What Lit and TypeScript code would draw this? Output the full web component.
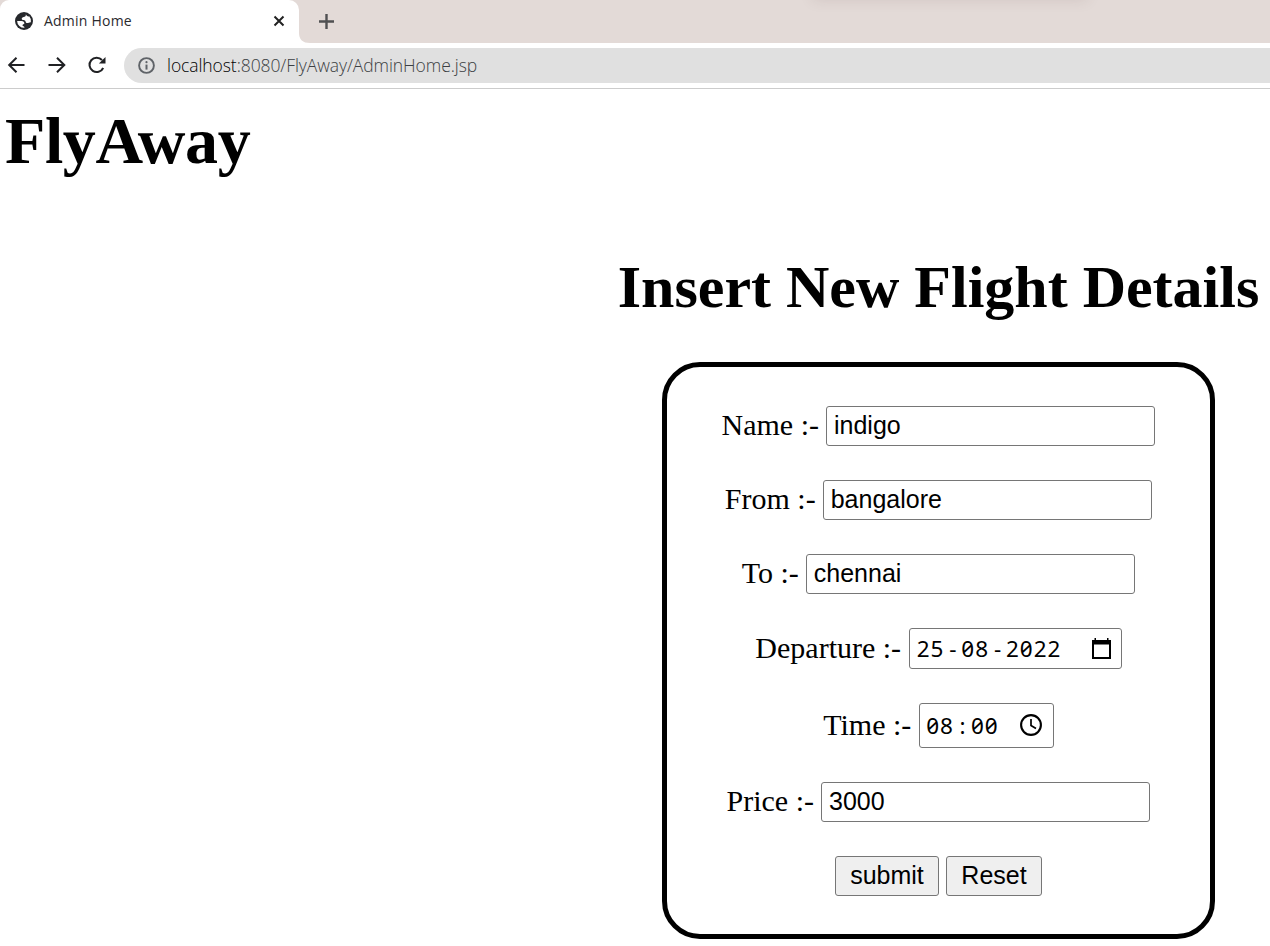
import { LitElement, html, css } from "lit";
import { customElement } from "lit/decorators.js";

@customElement("browser-chrome")
class BrowserChrome extends LitElement {
  static styles = css`
    :host { display: block; font-family: "Open Sans", "Noto Sans", sans-serif; }
    svg { display: block; flex: none; overflow: visible; }
    .strip { display: flex; height: 43px; background: #e3dad7; position: relative; overflow: hidden; }
    .tab { box-sizing: border-box; display: flex; align-items: center; width: 299px; height: 43px;
      background: #fff; border-radius: 9px 10px 0 0; padding: 0 14px 1px 15px; }
    .title { flex: 1; margin-left: 11px; font-size: 14px; line-height: 20px; color: #2a2a2e; white-space: nowrap; letter-spacing: 0.220px; }
    .flare { align-self: flex-end; }
    .plus { align-self: center; margin: 0 0 1px 9px; }
    .glow { position: absolute; left: 815px; top: -20px; width: 270px; height: 18px; box-shadow: 0 0 14px 2px rgba(90, 60, 60, 0.13); }
    .bar { display: flex; align-items: center; height: 45px; background: #fff; border-bottom: 1px solid #ccc; }
    .nav { display: flex; align-items: center; gap: 22px; width: 124px; box-sizing: border-box; padding: 0 0 1px 8px; }
    .omni { flex: 1; display: flex; align-items: center; height: 35px; background: #e0e0e0; border-radius: 18px 0 0 18px; padding-left: 14px; }
    .url { margin-left: 12px; padding-bottom: 2px; font-size: 17.500px; line-height: 24px; font-weight: 300; letter-spacing: -0.080px; color: #3c3f43; white-space: nowrap; }
    .host { color: #000; }
  `;
  render() {
    return html`
      <div class="strip">
        <div class="tab">
          <svg width="18" height="18" viewBox="0 0 18 18">
            <circle cx="9" cy="9" r="9" fill="#26282c" />
            <path d="M10.800 2.300c.5 1.700-.8 2.500-2.200 2.700-1.700.3-2.200 1.500-1.600 2.600.7 1.100 2.300.3 3.200 1.100.7.8.3 2 1.500 2.300 1.500.4 2.400-1 4.200-.8A7 7 0 0 0 14.200 4.200C13.200 5 12 4.300 10.800 2.300zM2.100 9h4.300c1.900 0 3.300 1.300 3 2.600-.3 1-1.900.7-2 1.700-.1 1 2.200.9 2.100 2.500A7 7 0 0 1 2.100 9z" fill="#fff" />
          </svg>
          <span class="title">Admin Home</span>
          <svg width="12" height="12" viewBox="0 0 12 12"><path d="M1.500 1.500l9 9M10.500 1.500l-9 9" stroke="#222" stroke-width="2" /></svg>
        </div>
        <svg class="flare" width="11" height="10" viewBox="0 0 11 10"><path d="M0 0Q0 10 11 10H0z" fill="#fff" /></svg>
        <svg class="plus" width="15" height="15" viewBox="0 0 15 15"><path d="M7.500 0v15M0 7.500h15" stroke="#505052" stroke-width="2.400" /></svg>
        <div class="glow"></div>
      </div>
      <div class="bar">
        <div class="nav">
          <svg width="18" height="18" viewBox="0 0 18 18" fill="none" stroke="#202124" stroke-width="2"><path d="M16.500 9H1.500M8.500 1.800L1.200 9l7.300 7.200" /></svg>
          <svg width="18" height="18" viewBox="0 0 18 18" fill="none" stroke="#202124" stroke-width="2"><path d="M.5 9h15.500M9 1.800L16.300 9 9 16.200" /></svg>
          <svg width="18" height="18" viewBox="0 0 18 18"><path d="M15.200 12A7.200 7.200 0 1 1 14 4" fill="none" stroke="#202124" stroke-width="2" /><path d="M17.500 1v6.600h-6.600z" fill="#202124" /></svg>
        </div>
        <div class="omni">
          <svg width="17" height="17" viewBox="0 0 17 17"><circle cx="8.500" cy="8.500" r="7.400" fill="none" stroke="#5f6368" stroke-width="1.900" /><path d="M8.500 7.600v5" stroke="#5f6368" stroke-width="2" /><circle cx="8.500" cy="5.200" r="1.100" fill="#5f6368" /></svg>
          <span class="url"><span class="host">localhost</span>:8080/FlyAway/AdminHome.jsp</span>
        </div>
      </div>
    `;
  }
}

@customElement("app-root")
class AppRoot extends LitElement {
  static styles = css`
    :host { display: block; height: 946px; overflow: hidden; background: #fff; color: #000;
      font-family: "Liberation Serif", "Times New Roman", serif; }
    .brand { margin: 14px 0 0 5px; font-size: 66px; line-height: 76px; font-weight: 700; letter-spacing: -0.400px; }
    .content { margin-left: 607px; display: flex; flex-direction: column; align-items: center; }
    .heading { margin: 74px 0 0; font-size: 60px; line-height: 68px; font-weight: 700; white-space: nowrap; }
    .card { box-sizing: border-box; width: 553px; height: 577px; margin-top: 41px; padding-top: 39px;
      border: 5px solid #000; border-radius: 38px; display: flex; flex-direction: column; align-items: center; gap: 34px; }
    .row { display: flex; align-items: center; gap: 7.500px; font-size: 30px; line-height: 34px; white-space: nowrap; }
    .label { padding-bottom: 2px; }
    .field, .btn, .picker { box-sizing: border-box; border: 1px solid #767676; border-radius: 3px; margin: 0; color: #000; }
    .field { width: 329px; height: 40px; padding: 0 6.500px 1px; background: #fff; outline: 0; font: 25px "Liberation Sans", Arial, sans-serif; }
    .picker { display: flex; align-items: center; justify-content: space-between; background: #fff; padding: 0 10px 0 7px;
      font: 22.500px/30px "Noto Sans", sans-serif; font-feature-settings: "zero", "tnum"; }
    .date { width: 213px; height: 41px; }
    .time { width: 135px; height: 45px; padding: 0 11px 1px 6.500px; }
    .digits { display: flex; letter-spacing: 0.900px; padding-top: 1px; }
    .sep { width: 17.200px; text-align: center; letter-spacing: 0; }
    .calendar { margin-bottom: 1px; }
    .actions { display: flex; gap: 7px; }
    .btn { height: 40px; padding: 0 0 2px; background: #efefef; font: 25px "Liberation Sans", Arial, sans-serif; }
    .submit { width: 104px; }
    .reset { width: 96px; }
    svg { display: block; flex: none; }
  `;
  private textRow(label: string, value: string) {
    return html`<div class="row"><span class="label">${label} :-</span><input class="field" type="text" .value=${value} /></div>`;
  }
  render() {
    return html`
      <browser-chrome></browser-chrome>
      <h1 class="brand">FlyAway</h1>
      <div class="content">
        <h2 class="heading">Insert New Flight Details</h2>
        <div class="card">
          ${this.textRow("Name", "indigo")}
          ${this.textRow("From", "bangalore")}
          ${this.textRow("To", "chennai")}
          <div class="row">
            <span class="label">Departure :-</span>
            <div class="picker date">
              <span class="digits"><span>25</span><span class="sep">-</span><span>08</span><span class="sep">-</span><span>2022</span></span>
              <svg class="calendar" width="19" height="21" viewBox="0 0 19 21"><path d="M1 4h17v16H1z" fill="none" stroke="#000" stroke-width="2" /><path d="M0 2h19v4.500H0zM2.500 0h1.500v3H2.500zM15 0h1.500v3H15z" /></svg>
            </div>
          </div>
          <div class="row">
            <span class="label">Time :-</span>
            <div class="picker time">
              <span class="digits"><span>08</span><span class="sep">:</span><span>00</span></span>
              <svg width="22" height="22" viewBox="0 0 22 22" fill="none" stroke="#000"><circle cx="11" cy="11" r="9.900" stroke-width="2.100" /><path d="M11 5v6.500l5 3" stroke-width="1.700" /></svg>
            </div>
          </div>
          ${this.textRow("Price", "3000")}
          <div class="actions">
            <button class="btn submit">submit</button>
            <button class="btn reset">Reset</button>
          </div>
        </div>
      </div>
    `;
  }
}
